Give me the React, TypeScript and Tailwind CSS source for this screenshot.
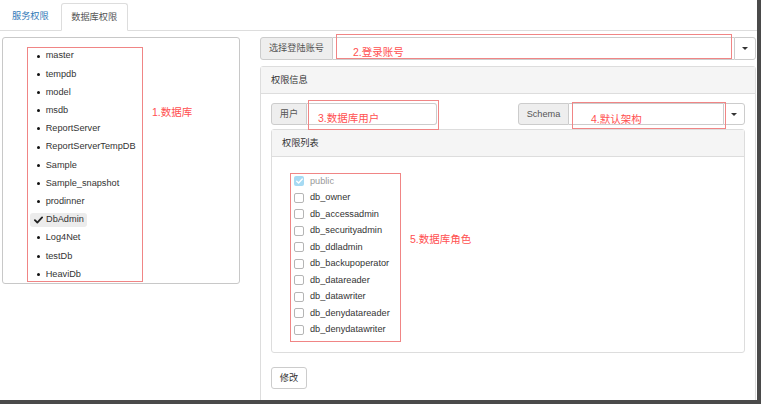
import React from "react";

const databases = [
  "master",
  "tempdb",
  "model",
  "msdb",
  "ReportServer",
  "ReportServerTempDB",
  "Sample",
  "Sample_snapshot",
  "prodinner",
  "DbAdmin",
  "Log4Net",
  "testDb",
  "HeaviDb",
];

const roles = [
  "public",
  "db_owner",
  "db_accessadmin",
  "db_securityadmin",
  "db_ddladmin",
  "db_backupoperator",
  "db_datareader",
  "db_datawriter",
  "db_denydatareader",
  "db_denydatawriter",
];

function Caret() {
  return (
    <span className="block w-0 h-0 border-l-[3px] border-r-[3px] border-t-[3px] border-l-transparent border-r-transparent border-t-[#333]" />
  );
}

function CheckMark({ className }: { className?: string }) {
  return (
    <svg viewBox="0 0 10 8" className={className}>
      <path d="M1 4.2 L3.7 6.8 L9 1.2" fill="none" stroke="currentColor" strokeWidth="2" strokeLinecap="round" strokeLinejoin="round" />
    </svg>
  );
}

export default function App() {
  return (
    <div className="relative w-[761px] h-[404px] overflow-hidden bg-[#4a4a4a] font-['Liberation_Sans','Noto_Sans_CJK_SC',sans-serif] text-[9.2px] text-[#333]">
      <div className="w-[757px] h-[400px] bg-white overflow-hidden">
        {/* tabs */}
        <div className="flex items-end h-[31px] border-b border-[#ddd] pl-[3px]">
          <div className="h-[27px] px-[9px] pt-[1px] flex items-center text-[#337ab7] mr-[3px]">服务权限</div>
          <div className="h-[28px] -mb-px px-[9.5px] pt-[1px] flex items-center bg-white border border-[#ddd] border-b-white rounded-t-[3px] text-[#555]">
            数据库权限
          </div>
        </div>

        <div className="flex items-start pt-[6px] pl-[2px]">
          {/* database list */}
          <div className="w-[238px] h-[247px] border border-[#c8c8c8] rounded-[3px] pt-[9px]">
            {databases.map((db) =>
              db === "DbAdmin" ? (
                <div key={db} className="h-[18.2px] flex items-center pl-[27px]">
                  <div className="flex items-center h-[14.5px] w-[57px] rounded-[3px] bg-[#ececec] pl-[4px]">
                    <CheckMark className="w-[9px] h-[8px] text-[#222]" />
                    <span className="ml-[3px] leading-none">{db}</span>
                  </div>
                </div>
              ) : (
                <div key={db} className="h-[18.2px] flex items-center pl-[34px]">
                  <span className="w-[3px] h-[3px] rounded-full bg-[#111]" />
                  <span className="ml-[5.7px] leading-none">{db}</span>
                </div>
              )
            )}
          </div>

          {/* right side */}
          <div className="ml-[20px] w-[496px] flex flex-col">
            <div className="flex h-[23px]">
              <div className="w-[73px] pt-[1px] flex items-center justify-center bg-[#eee] border border-[#ccc] rounded-l-[3px] text-[#555]">
                选择登陆账号
              </div>
              <div className="flex-1 border-y border-[#ccc] bg-white" />
              <div className="w-[22px] flex items-center justify-center border border-[#ccc] rounded-r-[3px] bg-white">
                <Caret />
              </div>
            </div>

            <div className="mt-[6px] h-[340px] border border-[#ddd] rounded-[3px]">
              <div className="h-[27px] flex items-center pl-[10px] pt-[2px] bg-[#f5f5f5] border-b border-[#ddd] text-[#333]">
                权限信息
              </div>
              <div className="px-[10px] pt-[9px]">
                <div className="flex justify-between h-[22px]">
                  <div className="flex">
                    <div className="w-[36px] pt-[1px] flex items-center justify-center bg-[#eee] border border-[#ccc] rounded-l-[3px] text-[#555]">
                      用户
                    </div>
                    <div className="w-[130px] border border-l-0 border-[#ccc] rounded-r-[3px] bg-white" />
                  </div>
                  <div className="flex">
                    <div className="w-[51px] pt-[1px] flex items-center justify-center bg-[#eee] border border-[#ccc] rounded-l-[3px] text-[#555]">
                      Schema
                    </div>
                    <div className="w-[154px] border-y border-[#ccc] bg-white" />
                    <div className="w-[22px] flex items-center justify-center border border-[#ccc] rounded-r-[3px] bg-white">
                      <Caret />
                    </div>
                  </div>
                </div>

                <div className="mt-[4px] h-[224px] border border-[#ddd] rounded-[3px]">
                  <div className="h-[27px] flex items-center pl-[10px] pt-[2px] bg-[#f5f5f5] border-b border-[#ddd]">权限列表</div>
                  <div className="pt-[16px] pl-[22px]">
                    {roles.map((r) => {
                      const on = r === "public";
                      return (
                        <div key={r} className="h-[16.5px] flex items-center">
                          {on ? (
                            <span className="w-[10px] h-[10px] rounded-[2px] bg-[#a6daf3] flex items-center justify-center">
                              <CheckMark className="w-[7px] h-[6px] text-white" />
                            </span>
                          ) : (
                            <span className="w-[10px] h-[10px] rounded-[2px] border border-[#b5b5b5] bg-white" />
                          )}
                          <span className={`ml-[6px] leading-none ${on ? "text-[#999]" : "text-[#333]"}`}>{r}</span>
                        </div>
                      );
                    })}
                  </div>
                </div>

                <div className="mt-[14px] w-[36px] h-[22px] pt-[1px] flex items-center justify-center border border-[#ccc] rounded-[3px] bg-white">
                  修改
                </div>
              </div>
            </div>
          </div>
        </div>
      </div>

      {/* annotations */}
      <div className="absolute left-[27px] top-[47px] w-[116px] h-[235px] border border-[#f08585]" />
      <span className="absolute left-[152px] top-[105px] text-[10.5px] leading-[14px] text-[#ff5050]">1.数据库</span>

      <div className="absolute left-[336px] top-[34px] w-[396px] h-[25px] border border-[#f08585]" />
      <span className="absolute left-[353px] top-[45px] text-[10.5px] leading-[14px] text-[#ff5050]">2.登录账号</span>

      <div className="absolute left-[308px] top-[100px] w-[131px] h-[30px] border border-[#f08585]" />
      <span className="absolute left-[318px] top-[111px] text-[10.5px] leading-[14px] text-[#ff5050]">3.数据库用户</span>

      <div className="absolute left-[572px] top-[102px] w-[154px] h-[27px] border border-[#f08585]" />
      <span className="absolute left-[591px] top-[112px] text-[10.5px] leading-[14px] text-[#ff5050]">4.默认架构</span>

      <div className="absolute left-[290px] top-[173px] w-[111px] h-[169px] border border-[#f08585]" />
      <span className="absolute left-[410px] top-[232px] text-[10.5px] leading-[14px] text-[#ff5050]">5.数据库角色</span>
    </div>
  );
}
